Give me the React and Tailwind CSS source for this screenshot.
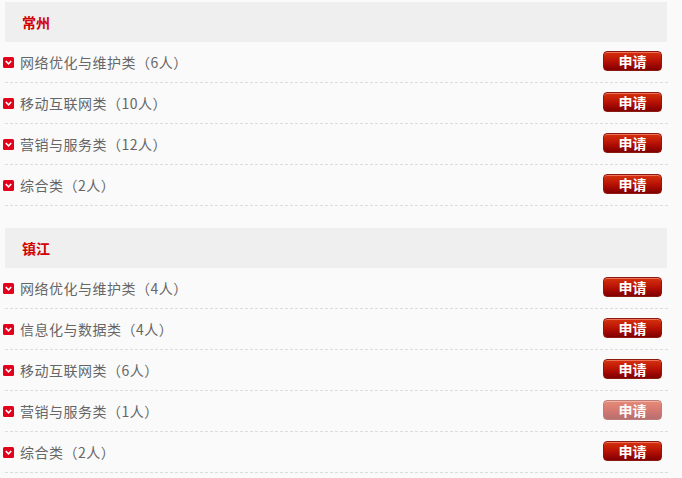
const sections = [
  {
    city: "常州",
    jobs: [
      "网络优化与维护类（6人）",
      "移动互联网类（10人）",
      "营销与服务类（12人）",
      "综合类（2人）",
    ],
  },
  {
    city: "镇江",
    jobs: [
      "网络优化与维护类（4人）",
      "信息化与数据类（4人）",
      "移动互联网类（6人）",
      "营销与服务类（1人）",
      "综合类（2人）",
    ],
  },
];

const font = { fontFamily: '"Microsoft YaHei", "Noto Sans CJK SC", sans-serif' };

const ArrowIcon = () => (
  <svg width="11" height="11" viewBox="0 0 11 11" className="shrink-0">
    <rect x="0" y="0" width="11" height="11" rx="1.5" fill="#e2001a" />
    <path d="M2.8 4 L5.5 6.8 L8.2 4" stroke="#fff" strokeWidth="1.6" fill="none" />
  </svg>
);

const ApplyButton = ({ faded }) => (
  <button
    className={`w-[59px] h-[20px] rounded-[4px] border border-[#8a1a10] bg-gradient-to-b from-[#d6300e] via-[#b81204] to-[#820000] text-white text-[14px] font-bold leading-none shadow-[inset_0_1px_0_rgba(255,160,140,0.6)] ${faded ? "opacity-55" : ""}`}
  >
    申请
  </button>
);

export default function App() {
  return (
    <div className="w-[682px] h-[478px] bg-[#fafafa] overflow-hidden pt-[2px] pl-[3px]" style={font}>
      {sections.map((s, si) => (
        <div key={s.city} className={`w-[665px] ${si > 0 ? "mt-[22px]" : ""}`}>
          <div className="ml-[2px] w-[662px] h-[40px] bg-[#efefef] flex items-center pl-[17px]">
            <span className="text-[#d20000] text-[14px] font-bold">{s.city}</span>
          </div>
          {s.jobs.map((job, i) => (
            <div key={job}>
              <div className="h-[40px] flex items-center pr-[6px]">
                <ArrowIcon />
                <span className="ml-[6px] text-[14px] text-[#666] tracking-[0.5px]">{job}</span>
                <div className="ml-auto -mt-[4px]">
                  <ApplyButton faded={si === 1 && i === 3} />
                </div>
              </div>
              <div className="ml-[2px] w-[663px] border-b border-dashed border-[#dcdcdc]" />
            </div>
          ))}
        </div>
      ))}
    </div>
  );
}
